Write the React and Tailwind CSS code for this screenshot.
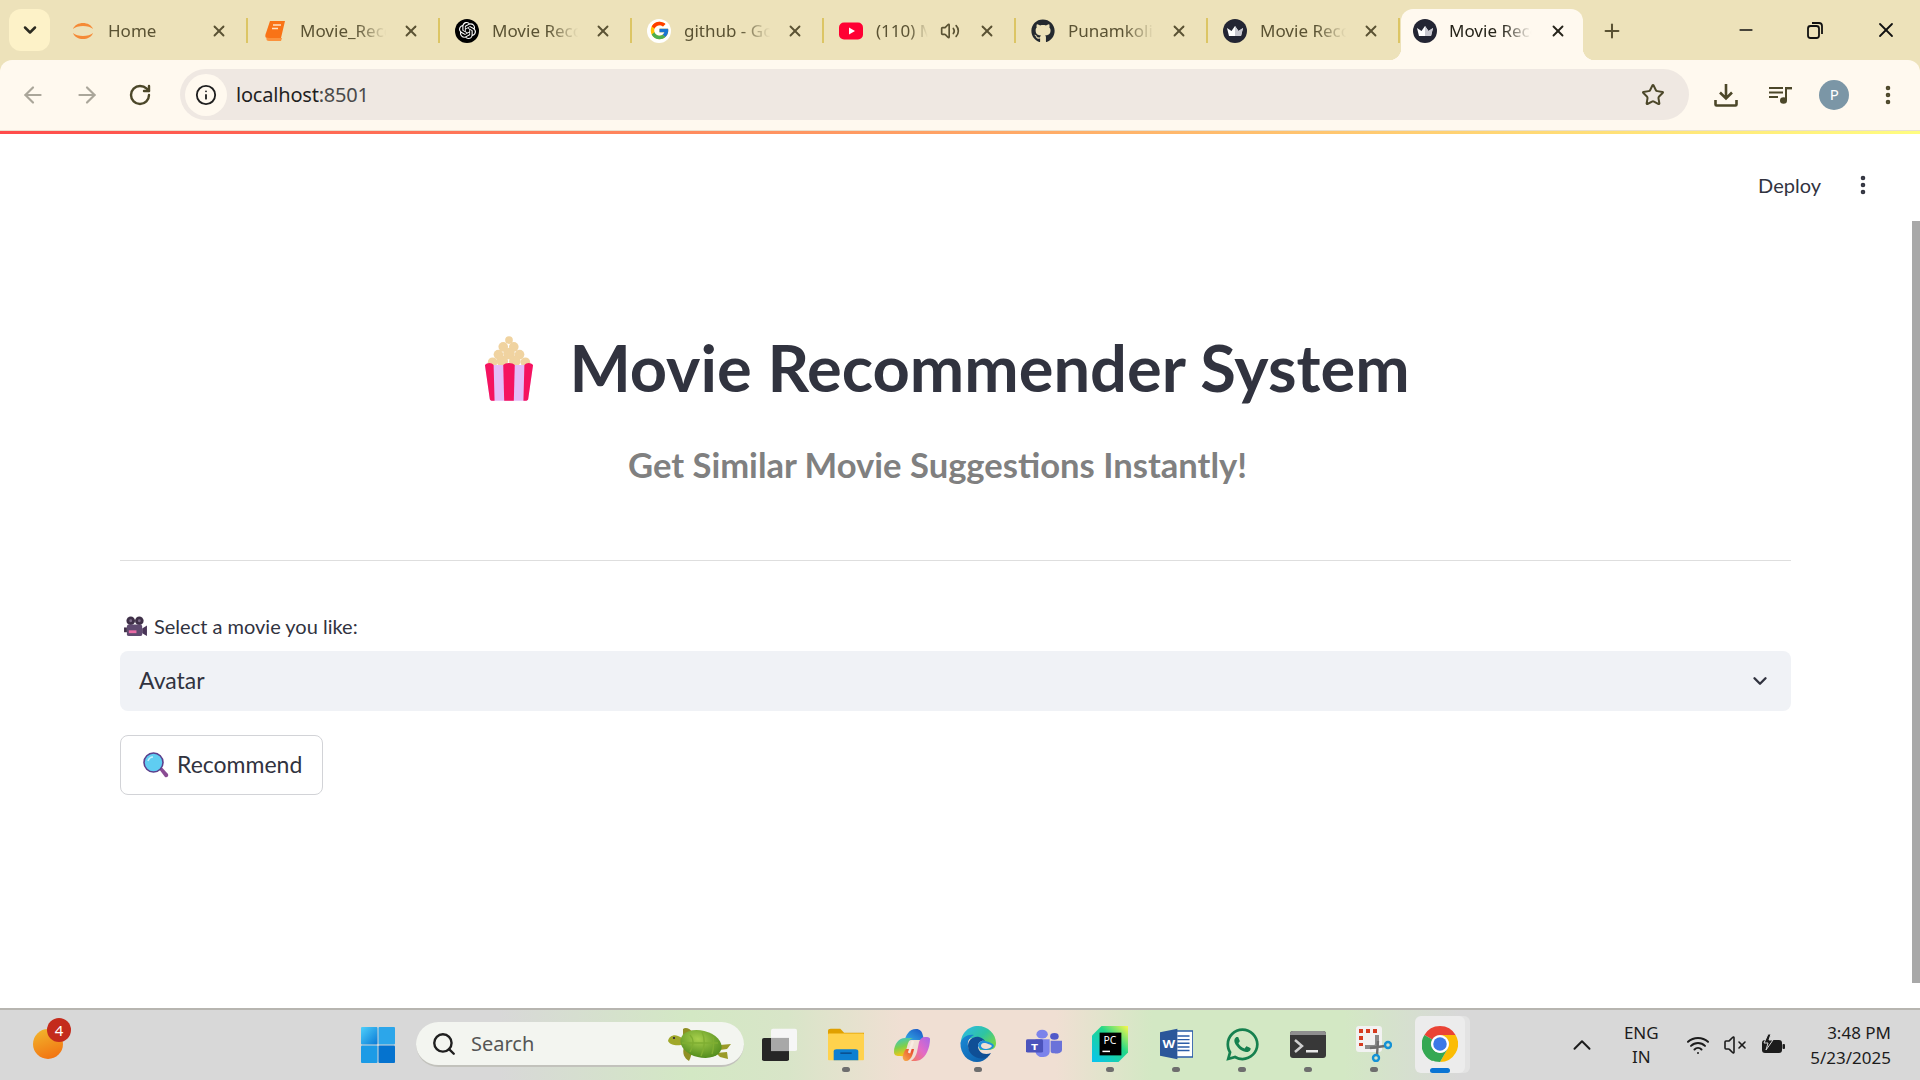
import {
  ArrowLeft,
  ArrowRight,
  ChevronDown,
  ChevronUp,
  Info,
  Minus,
  MoreVertical,
  Plus,
  RotateCw,
  Search,
  Star,
  Volume2,
  VolumeX,
  Wifi,
  X,
} from "lucide-react";
import { FaGithub, FaWhatsapp } from "react-icons/fa";
import { FcGoogle } from "react-icons/fc";
import { SiOpenai } from "react-icons/si";

//Favicons
const HomeIcon = () => (
  <svg viewBox="0 0 24 24" className="w-6 h-6">
    <path d="M2 10C5 2 19 2 22 10C18 6 6 6 2 10Z" fill="#f58a36" />
    <path d="M2 14C5 22 19 22 22 14C18 18 6 18 2 14Z" fill="#f58a36" />
  </svg>
);

const BookIcon = () => (
  <svg viewBox="0 0 24 24" className="w-6 h-6">
    <path d="M7 2H22L18 19H4C2 19 2 16 3 14Z" fill="#f97316" />
    <path d="M3.5 18.5C3 21 4 22 6 22H18L19 19H6Z" fill="#fb923c" />
    <path d="M10 6H18M9 9.5H15" stroke="#ffe2c4" strokeWidth="1.5" />
  </svg>
);

const OpenAiIcon = () => (
  <div className="w-6 h-6 rounded-full bg-black flex items-center justify-center text-white">
    <SiOpenai size={17} />
  </div>
);

const GoogleIcon = () => (
  <div className="w-6 h-6 rounded-full bg-white flex items-center justify-center">
    <FcGoogle size={21} />
  </div>
);

const YoutubeIcon = () => (
  <svg viewBox="0 0 24 24" className="w-6 h-6">
    <rect x="0" y="3.5" width="24" height="17" rx="5" fill="#ff0033" />
    <path d="M10 8.5L16 12L10 15.5Z" fill="#fff" />
  </svg>
);

const CrownIcon = () => (
  <svg viewBox="0 0 24 24" className="w-6 h-6 shrink-0">
    <circle cx="12" cy="12" r="12" fill="#232533" />
    <path d="M4 9L8.5 12L12 7L15.5 12L20 9L18 17H6Z" fill="#fff" />
    <path d="M12 7L15.5 12L20 9L18 17H12Z" fill="#c9c9d1" />
  </svg>
);

//Toolbar icons
const DownloadIcon = () => (
  <svg viewBox="0 0 24 24" className="w-6 h-6" fill="none" stroke="#4c4729" strokeWidth="2.6">
    <path d="M12 1V15M6 9.5L12 15.5L18 9.5" />
    <path d="M1.5 17V21.5C1.5 22 2 22.5 2.5 22.5H21.5C22 22.5 22.5 22 22.5 21.5V17" />
  </svg>
);

const MusicQueue = () => (
  <svg viewBox="0 0 24 18" className="w-6 h-[18px]" fill="#4c4729">
    <rect x="0" y="1" width="14" height="2" />
    <rect x="0" y="5.5" width="14" height="2" />
    <rect x="0" y="10" width="9" height="2" />
    <rect x="16" y="1" width="2" height="13" />
    <rect x="16" y="1" width="7" height="2.4" />
    <ellipse cx="14.5" cy="14.5" rx="3.5" ry="3.2" />
  </svg>
);

//Popcorn emoji
const Popcorn = () => (
  <svg viewBox="0 0 52 68" className="w-[50px] h-[66px] shrink-0">
    <g fill="#f0d3a0">
      <circle cx="26" cy="5" r="4" />
      <circle cx="20" cy="12" r="5" />
      <circle cx="31" cy="12" r="5" />
      <circle cx="15" cy="20" r="5" />
      <circle cx="26" cy="19" r="6" />
      <circle cx="37" cy="20" r="5" />
      <circle cx="9" cy="28" r="5" />
      <circle cx="19" cy="27" r="6" />
      <circle cx="32" cy="27" r="6" />
      <circle cx="43" cy="28" r="5" />
    </g>
    <path d="M1 31H51L46 66C46 67 45 68 44 68H8C7 68 6 67 6 66Z" fill="#e3bdf8" />
    <path d="M1 31C3 28 8 28 10 31L11 68H8C7 68 6 67 6 66Z" fill="#f5135f" />
    <path d="M20 31C22 28 30 28 32 31L31 68H21Z" fill="#f5135f" />
    <path d="M42 31C44 28 49 28 51 31L46 66C46 67 45 68 44 68H41Z" fill="#f5135f" />
  </svg>
);

const MovieCamera = () => (
  <svg viewBox="0 0 24 22" className="w-[23px] h-[21px] shrink-0">
    <circle cx="7" cy="5" r="4.5" fill="#3f3048" />
    <circle cx="16" cy="5" r="4.5" fill="#3f3048" />
    <circle cx="7" cy="5" r="1.5" fill="#7d6b88" />
    <circle cx="16" cy="5" r="1.5" fill="#7d6b88" />
    <rect x="3" y="9" width="16" height="12" rx="2" fill="#5f4a70" />
    <rect x="5" y="15" width="8" height="3" fill="#e96aa5" />
    <path d="M19 13L24 10V21L19 18Z" fill="#4a3558" />
    <rect x="0" y="12" width="3" height="5" fill="#3f3048" />
  </svg>
);

const Magnifier = () => (
  <svg viewBox="0 0 26 26" className="w-[26px] h-[26px] shrink-0">
    <path d="M16 17L18.5 15L25 22C26 24 24 26 22 25Z" fill="#8a4b93" />
    <circle cx="10.5" cy="10.5" r="9.5" fill="#5fcdf2" stroke="#5b3f8c" strokeWidth="1.6" />
    <path d="M5 9C6 6 8 5 10 5" stroke="#c5f0fc" strokeWidth="1.6" fill="none" />
  </svg>
);

//Taskbar icons
const WindowsLogo = () => (
  <svg viewBox="0 0 34 36" className="w-[34px] h-[36px]">
    <defs>
      <linearGradient id="winA" x1="0" y1="0" x2="1" y2="1">
        <stop offset="0" stopColor="#4fd0fb" />
        <stop offset="1" stopColor="#0a7ad6" />
      </linearGradient>
    </defs>
    <rect x="0" y="0" width="16.5" height="17.5" rx="1" fill="url(#winA)" />
    <rect x="17.5" y="0" width="16.5" height="17.5" rx="1" fill="#2ca6ea" />
    <rect x="0" y="18.5" width="16.5" height="17.5" rx="1" fill="#1c9be6" />
    <rect x="17.5" y="18.5" width="16.5" height="17.5" rx="1" fill="#0573cf" />
  </svg>
);

const Turtle = () => (
  <svg viewBox="0 0 64 34" className="w-16 h-[34px] shrink-0">
    <defs>
      <radialGradient id="shellA" cx="0.4" cy="0.35" r="0.7">
        <stop offset="0" stopColor="#a8d04c" />
        <stop offset="1" stopColor="#4f8a1c" />
      </radialGradient>
    </defs>
    <path d="M15 8L15 2C17 0 22 1 24 5L26 9Z" fill="#8f8f24" />
    <path d="M16 20C14 26 16 31 21 34C23 30 24 26 24 22Z" fill="#8f8f24" />
    <path d="M52 18L63 17L59 22L52 23Z" fill="#9a9a28" />
    <path d="M48 26L59 25L60 32L52 30Z" fill="#9a9a28" />
    <path d="M0 14C1 9 6 7 10 9C13 10 16 12 18 15L13 18C8 19 2 18 0 14Z" fill="#a0a82a" />
    <circle cx="6" cy="11" r="1.1" fill="#2a1f3a" />
    <ellipse cx="33" cy="17" rx="21" ry="13.5" transform="rotate(14 33 17)" fill="url(#shellA)" />
    <path d="M22 8C26 12 26 18 22 25M34 5C37 11 37 20 33 29M45 10C46 15 46 20 44 27M14 16H50" stroke="#7fae32" strokeWidth="1.4" fill="none" />
  </svg>
);

const TaskView = () => (
  <svg viewBox="0 0 36 40" className="w-9 h-[33px]" preserveAspectRatio="none">
    <rect x="0" y="12" width="27" height="28" rx="2" fill="#262626" />
    <rect x="9" y="1" width="26" height="27" rx="2" fill="#f6f6f6" />
    <rect x="9" y="12" width="18" height="16" fill="#a8a8a8" />
  </svg>
);

const FilesIcon = () => (
  <svg viewBox="0 0 38 42" className="w-9 h-[33px]" preserveAspectRatio="none">
    <path d="M0 4C0 2 1 1 3 1H13L17 6H38V12H0Z" fill="#e0a000" />
    <rect x="0" y="7" width="38" height="34" rx="1" fill="#ffd24d" />
    <path d="M6 41V30C6 28 7 27 9 27H29C31 27 32 28 32 30V41Z" fill="#0d7fd1" />
    <rect x="13" y="31" width="12" height="2" fill="#0a4f8f" />
  </svg>
);

const CopilotIcon = () => (
  <svg viewBox="0 0 36 33" className="w-9 h-[33px]">
    <defs>
      <linearGradient id="copA" x1="0" y1="1" x2="1" y2="0">
        <stop offset="0" stopColor="#35b8e8" />
        <stop offset="1" stopColor="#1a4fc4" />
      </linearGradient>
      <linearGradient id="copB" x1="0" y1="1" x2="1" y2="0">
        <stop offset="0" stopColor="#f47a5a" />
        <stop offset="0.5" stopColor="#e36ac6" />
        <stop offset="1" stopColor="#a767e8" />
      </linearGradient>
      <linearGradient id="copC" x1="0" y1="0" x2="0.3" y2="1">
        <stop offset="0" stopColor="#35c4d6" />
        <stop offset="0.55" stopColor="#7ed04a" />
        <stop offset="1" stopColor="#f5c518" />
      </linearGradient>
      <linearGradient id="copD" x1="0" y1="1" x2="1" y2="0">
        <stop offset="0" stopColor="#f7b04a" />
        <stop offset="1" stopColor="#e8402c" />
      </linearGradient>
    </defs>
    <path d="M10 14C12 7 15 1 22 1C26 1 28 3 29 8L30 12H17Z" fill="url(#copA)" />
    <path d="M0 24C0 16 5 10 11 10H19C15 11 14 15 13 19L11 26C10 29 8 28 5 28C2 28 0 27 0 24Z" fill="url(#copC)" />
    <path d="M36 11C36 20 32 29 26 32C24 33 20 33 17 33C20 31 22 28 23 24L25 14C26 11 28 9 31 9H33C35 9 36 10 36 11Z" fill="url(#copB)" />
    <path d="M9 27C10 24 11 22 12 21H20C19 26 17 33 12 33C10 33 8 31 9 27Z" fill="url(#copD)" />
    <path d="M15 25L19 13" stroke="#f8ebe2" strokeWidth="2.4" />
  </svg>
);

const EdgeIcon = () => (
  <svg viewBox="0 0 36 36" className="w-9 h-9">
    <defs>
      <linearGradient id="edgeA" x1="0" y1="0" x2="1" y2="0.7">
        <stop offset="0" stopColor="#2fb8ee" />
        <stop offset="0.6" stopColor="#2fc5a0" />
        <stop offset="1" stopColor="#74d64a" />
      </linearGradient>
      <linearGradient id="edgeB" x1="0" y1="0" x2="1" y2="1">
        <stop offset="0" stopColor="#1a8ad6" />
        <stop offset="1" stopColor="#0c5aa6" />
      </linearGradient>
    </defs>
    <path d="M18 0C28 0 36 8 36 17C36 22 33 24 28 24H20C18 20 20 16 24 15C20 10 8 10 1 19C0 8 8 0 18 0Z" fill="url(#edgeA)" />
    <path d="M0.5 17C2 11 8 8 14 9C10 11 7 15 8 20C9 28 18 34 28 31C25 34 21 36 17 36C8 36 0 28 0.5 17Z" fill="url(#edgeB)" />
    <path d="M8 20C8 14 13 10 19 11C22 12 24 13 25 15C21 14 18 17 18 20C18 26 24 30 31 27C29 30 28 31 26 32C16 34 8 28 8 20Z" fill="#0f4f96" />
    <path d="M25 15C30 16 34 18 34 20C33 23 29 24 26 24C21 24 19 22 18 20C18 17 21 14 25 15Z" fill="#1e8fdb" />
    <path d="M24 17C27 17 31 19 32 20C31 22 28 23 26 23C23 23 21 21 21 20C21 18 22 17 24 17Z" fill="#f0dfd3" />
  </svg>
);

const TeamsIcon = () => (
  <svg viewBox="0 0 38 42" className="w-9 h-[31px]" preserveAspectRatio="none">
    <circle cx="17" cy="7" r="6" fill="#7b83eb" />
    <circle cx="30" cy="10" r="4.5" fill="#5059c9" />
    <path d="M10 14H25V30C25 36 21 38 17 38C13 38 10 34 10 30Z" fill="#7b83eb" />
    <path d="M26 16H38V28C38 32 34 34 30 33C28 33 26 32 26 30Z" fill="#6a72d9" />
    <rect x="0" y="14" width="18" height="18" rx="2" fill="#4b53bc" />
    <text x="9" y="28" textAnchor="middle" fontSize="13" fontWeight="700" fontFamily="Noto Sans" fill="#fff">T</text>
  </svg>
);

const PyCharmIcon = () => (
  <svg viewBox="0 0 38 38" className="w-9 h-9">
    <defs>
      <linearGradient id="pcA" x1="0" y1="1" x2="1" y2="0">
        <stop offset="0" stopColor="#07c3f2" />
        <stop offset="0.6" stopColor="#21d789" />
        <stop offset="1" stopColor="#fcf84a" />
      </linearGradient>
    </defs>
    <path d="M10 0H38V28L28 38H0V10Z" fill="url(#pcA)" />
    <rect x="8" y="7" width="23" height="24" fill="#000" />
    <text x="19" y="19" textAnchor="middle" fontSize="11" fontFamily="Noto Sans" fill="#fff">PC</text>
    <rect x="11" y="26" width="8" height="1.6" fill="#fff" />
  </svg>
);

const WordIcon = () => (
  <svg viewBox="0 0 38 44" className="w-[33px] h-[32px]" preserveAspectRatio="none">
    <rect x="14" y="4" width="24" height="36" rx="1" fill="#fff" stroke="#2b5ca8" strokeWidth="2" />
    <path d="M20 11H34M20 16H34M20 21H34M20 26H34M20 31H34" stroke="#2b5ca8" strokeWidth="2" />
    <path d="M0 6L20 1V43L0 38Z" fill="#2b579a" />
    <text x="10" y="28" textAnchor="middle" fontSize="15" fontWeight="700" fontFamily="Noto Sans" fill="#fff">W</text>
  </svg>
);

const TerminalIcon = () => (
  <svg viewBox="0 0 36 27" className="w-9 h-[27px]">
    <rect x="0" y="0" width="36" height="27" rx="3" fill="#383838" />
    <path d="M0 3C0 1 1 0 3 0H33C35 0 36 1 36 3V4H0Z" fill="#8f8f8f" />
    <path d="M5 9L12 15L5 21" stroke="#cfcfcf" strokeWidth="2.5" fill="none" />
    <rect x="16" y="19" width="12" height="2.5" fill="#e8e8e8" />
  </svg>
);

const SnipIcon = () => (
  <svg viewBox="0 0 36 36" className="w-9 h-9">
    <rect x="0" y="0" width="26" height="26" rx="3" fill="#f2f2f2" />
    <g fill="#d63b1f">
      <rect x="3" y="3" width="4" height="4" />
      <rect x="10" y="3" width="4" height="4" />
      <rect x="17" y="3" width="4" height="4" />
      <rect x="3" y="10" width="4" height="4" />
      <rect x="3" y="17" width="4" height="3" />
    </g>
    <path d="M9 21H18C20 21 21 20 21 18V9" stroke="#8a8a8a" strokeWidth="4" fill="none" />
    <path d="M14 22L29 20M22 15L21 29" stroke="#6e6e6e" strokeWidth="2.4" fill="none" />
    <circle cx="32" cy="19" r="3" fill="none" stroke="#1492d6" strokeWidth="2.4" />
    <circle cx="20" cy="32" r="3" fill="none" stroke="#1492d6" strokeWidth="2.4" />
  </svg>
);

const ChromeIcon = () => (
  <svg viewBox="0 0 48 48" className="w-9 h-9">
    <path d="M24 0A24 24 0 0 1 44.8 12H24A12 12 0 0 0 13.6 18L3.2 12A24 24 0 0 1 24 0Z" fill="#ea4335" />
    <path d="M3.2 12L13.6 18A12 12 0 0 0 24 36L13.6 46.8A24 24 0 0 1 3.2 12Z" fill="#34a853" />
    <path d="M44.8 12A24 24 0 0 1 24 48L34.4 30A12 12 0 0 0 24 12Z" fill="#fbbc04" />
    <path d="M13.6 30A12 12 0 0 0 34.4 30L24 48A24 24 0 0 1 3.2 36Z" fill="#34a853" />
    <circle cx="24" cy="24" r="11.5" fill="#fff" />
    <circle cx="24" cy="24" r="9" fill="#3b78e7" />
  </svg>
);

const BatteryIcon = () => (
  <svg viewBox="0 0 24 22" className="w-6 h-[22px] ml-[14px]">
    <rect x="1" y="6" width="20" height="13" rx="3" fill="#1c1c1c" />
    <rect x="21.5" y="10" width="2.5" height="5" rx="1" fill="#1c1c1c" />
    <path d="M7 0L3 9H7L5 16L12 6H8L10 0Z" fill="#1c1c1c" stroke="#d8d8d8" strokeWidth="1" />
  </svg>
);

const tabs = [
  { id: 1, title: "Home", icon: <HomeIcon /> },
  { id: 2, title: "Movie_Recommender", icon: <BookIcon /> },
  { id: 3, title: "Movie Recommender", icon: <OpenAiIcon /> },
  { id: 4, title: "github - Google", icon: <GoogleIcon /> },
  { id: 5, title: "(110) Music", icon: <YoutubeIcon />, sound: true },
  { id: 6, title: "Punamkoli", icon: <FaGithub size={24} color="#24292f" /> },
  { id: 7, title: "Movie Recommender", icon: <CrownIcon /> },
];

const taskIcons = [
  { key: "task", icon: <TaskView /> },
  { key: "files", icon: <FilesIcon />, running: true },
  { key: "copilot", icon: <CopilotIcon /> },
  { key: "edge", icon: <EdgeIcon />, running: true },
  { key: "teams", icon: <TeamsIcon /> },
  { key: "pycharm", icon: <PyCharmIcon />, running: true },
  { key: "word", icon: <WordIcon />, running: true },
  { key: "whatsapp", icon: <FaWhatsapp size={37} color="#16804f" />, running: true },
  { key: "terminal", icon: <TerminalIcon />, running: true },
  { key: "snip", icon: <SnipIcon />, running: true },
];

const Tab = ({ title, icon, sound }) => (
  <div className="w-[192px] h-[43px] flex items-center pl-[16px] relative shrink-0">
    <div className="w-6 h-6 shrink-0 flex items-center justify-center">{icon}</div>
    <span
      className={`ml-[13px] overflow-hidden whitespace-nowrap text-[17px] text-[#5a5233] [mask-image:linear-gradient(90deg,black_62%,transparent_96%)] ${
        sound ? "w-[54px]" : "w-[90px]"
      }`}
    >
      {title}
    </span>
    {sound && <Volume2 size={20} className="ml-[10px] text-[#5a5233] shrink-0" />}
    <X size={18} strokeWidth={2.5} className={`text-[#5a5233] shrink-0 ${sound ? "ml-[18px]" : "ml-[12px]"}`} />
    <div className="absolute right-[-1px] top-[9px] w-[2px] h-[25px] bg-[#dcc565]" />
  </div>
);

const App = () => {
  return (
    <div className="w-full h-screen overflow-hidden flex flex-col bg-white font-['Noto_Sans',sans-serif]">
      {/* TAB STRIP */}
      <div className="h-[60px] shrink-0 bg-[#ede2ba] flex pl-[9px] pt-[9px]">
        <div className="w-[41px] h-[42px] rounded-xl bg-[#fdf2c8] flex items-center justify-center mr-[5px] shrink-0">
          <ChevronDown size={20} strokeWidth={3} className="text-[#2b2a20]" />
        </div>
        {tabs.map((tab) => (
          <Tab key={tab.id} {...tab} />
        ))}
        <div className="ml-[2px] w-[182px] h-[51px] bg-[#fff9ef] rounded-t-xl flex items-center pl-[12px] pb-[8px] relative shrink-0">
          <div className="absolute bottom-0 left-[-12px] w-3 h-3 bg-[radial-gradient(circle_at_0_0,transparent_12px,#fff9ef_12.5px)]" />
          <div className="absolute bottom-0 right-[-12px] w-3 h-3 bg-[radial-gradient(circle_at_100%_0,transparent_12px,#fff9ef_12.5px)]" />
          <CrownIcon />
          <span className="ml-[12px] w-[86px] overflow-hidden whitespace-nowrap text-[17px] text-[#26241a] [mask-image:linear-gradient(90deg,black_62%,transparent_96%)]">
            Movie Recommender
          </span>
          <X size={18} strokeWidth={2.5} className="ml-[14px] text-[#26241a] shrink-0" />
        </div>
        <div className="ml-[18px] h-[43px] flex items-center shrink-0">
          <Plus size={22} strokeWidth={2.2} className="text-[#5a5233]" />
        </div>
        <div className="flex-1 flex items-center justify-end h-[41px] pr-[22px] gap-[49px]">
          <Minus size={20} className="text-[#111]" />
          <svg viewBox="0 0 20 20" className="w-5 h-5" fill="none" stroke="#111" strokeWidth="1.8">
            <rect x="3" y="6" width="11" height="12" rx="2.5" />
            <path d="M7 3H14C16 3 17 4 17 6V14" />
          </svg>
          <X size={24} strokeWidth={1.8} className="text-[#111]" />
        </div>
      </div>

      {/* TOOLBAR */}
      <div className="h-[71px] shrink-0 bg-[#ede2ba]">
        <div className="h-full bg-[#fff9ef] rounded-t-xl border-b border-[#e9e0cf] flex items-center pb-[1px]">
          <div className="flex items-center pl-[20px] gap-[28px] shrink-0">
            <ArrowLeft size={26} className="text-[#aaa69a]" />
            <ArrowRight size={26} className="text-[#aaa69a]" />
            <RotateCw size={24} strokeWidth={2.4} className="text-[#4c4729]" />
          </div>
          <div className="ml-[28px] w-[1509px] h-[51px] bg-[#efe8e2] rounded-full flex items-center pl-[5px] pr-[24px] shrink-0">
            <div className="w-[42px] h-[42px] rounded-full bg-[#fff9ef] flex items-center justify-center">
              <Info size={22} strokeWidth={2} className="text-[#1f1f1f]" />
            </div>
            <span className="ml-[9px] flex-1 text-[20px] tracking-[-0.2px] text-[#1f1f1f]">
              localhost<span className="text-[#4a4a4a]">:8501</span>
            </span>
            <Star size={24} strokeWidth={2} className="text-[#4c4729]" />
          </div>
          <div className="flex-1 flex items-center justify-between pl-[25px] pr-[20px]">
            <DownloadIcon />
            <div className="pl-[4px]">
              <MusicQueue />
            </div>
            <div className="w-[30px] h-[30px] rounded-full bg-[#7b96a6] flex items-center justify-center text-white text-[15px]">
              P
            </div>
            <MoreVertical size={24} strokeWidth={2.6} className="text-[#4c4729]" />
          </div>
        </div>
      </div>

      {/* PAGE */}
      <div className="flex-1 relative overflow-hidden flex flex-col font-['Lato',sans-serif]">
        <div className="h-[3px] shrink-0 bg-[linear-gradient(90deg,#ff4b4b,#fffd80)]" />
        <div className="absolute right-0 top-[90px] w-[8px] h-[762px] bg-[#a8a8a8]" />
        <div className="flex justify-end items-center h-[30px] mt-[36px] pr-[45px] text-[#31333f]">
          <span className="text-[20px]">Deploy</span>
          <MoreVertical size={24} strokeWidth={2.6} className="ml-[30px] text-[#31333f]" />
        </div>

        <div className="pl-[120px] pr-[129px] flex flex-col">
          <div className="mt-[128px] h-[80px] flex items-center justify-center pr-[17px] gap-[35px]">
            <Popcorn />
            <h1 className="text-[65px] font-bold text-[#31333f] whitespace-nowrap">
              Movie Recommender System
            </h1>
          </div>
          <div className="mt-[32px] h-[50px] flex items-center justify-center pr-[36px]">
            <h2 className="text-[34.6px] font-bold text-[#808080] whitespace-nowrap">
              Get Similar Movie Suggestions Instantly!
            </h2>
          </div>
          <hr className="mt-[70px] border-t border-[#dedede]" />

          {/* SELECT */}
          <label className="mt-[53px] h-6 flex items-center pl-[4px] text-[20px] text-[#31333f]">
            <MovieCamera />
            <span className="ml-[7px]">Select a movie you like:</span>
          </label>
          <div className="mt-[13px] h-[60px] bg-[#f0f2f6] rounded-lg flex items-center justify-between pl-[19px] pr-[20px]">
            <span className="text-[23px] pb-[2px] text-[#31333f]">Avatar</span>
            <ChevronDown size={22} strokeWidth={2.6} className="text-[#31333f]" />
          </div>

          {/* BUTTON */}
          <button className="mt-[24px] w-[203px] h-[60px] bg-white border border-[#d2d3d7] rounded-lg flex items-center pl-[22px] text-[#31333f]">
            <Magnifier />
            <span className="ml-[8px] pb-[2px] text-[23px]">Recommend</span>
          </button>
        </div>
      </div>

      {/* TASKBAR */}
      <div className="h-[72px] shrink-0 border-t-2 border-[#b7b5b0] flex items-start bg-[linear-gradient(90deg,#d8d8d8_0%,#d8d8d8_26%,#d3e8c4_36%,#d8e5c8_41%,#f0dfd3_47%,#f0dfd3_55%,#d3e8c4_60%,#d3e8c4_70%,#d8d8d8_76%,#d8d8d8_100%)]">
        <div className="relative ml-[33px] mt-[19px] w-[30px] h-[30px] rounded-full bg-[linear-gradient(160deg,#f2b92e,#f26b0e)] shrink-0">
          <div className="absolute -top-[11px] left-[14px] w-[24px] h-[24px] rounded-full bg-[#c42b1c] text-white text-[15px] flex items-center justify-center">
            4
          </div>
        </div>
        <div className="ml-[298px] mt-[17px] shrink-0">
          <WindowsLogo />
        </div>
        <div className="ml-[21px] mt-[12px] w-[328px] h-[45px] rounded-full bg-[#f3f5f0] border-b-2 border-[#c2c2bc] flex items-center pl-[15px] pr-[12px] shrink-0">
          <Search size={26} strokeWidth={2.2} className="text-[#1f1f1f]" />
          <span className="ml-[14px] flex-1 text-[20px] text-[#555]">Search</span>
          <Turtle />
        </div>
        <div className="ml-[3px] flex shrink-0">
          {taskIcons.map((item) => (
            <div key={item.key} className="w-[66px] h-[70px] flex flex-col items-center justify-start pt-[11px] relative">
              <div className="h-[46px] flex items-center justify-center">{item.icon}</div>
              {item.running && <div className="absolute bottom-[8px] w-[8px] h-[5px] rounded-full bg-[#6e6e6e]" />}
            </div>
          ))}
          <div className="w-[66px] h-[70px] flex items-start justify-center pt-[6px]">
            <div className="w-[50px] h-[57px] rounded-md bg-[#ececec] shadow-[5px_0_0_#e3e3e3] flex flex-col items-center pt-[10px] relative">
              <ChromeIcon />
              <div className="absolute bottom-0 w-[20px] h-[5px] rounded-full bg-[#0a74d4]" />
            </div>
          </div>
        </div>
        <div className="flex-1 h-full flex items-center justify-end pr-[29px] text-[#1c1c1c]">
          <ChevronUp size={30} strokeWidth={1.6} />
          <div className="ml-[25px] w-[38px] text-center text-[17px] leading-[24px]">
            <div>ENG</div>
            <div>IN</div>
          </div>
          <Wifi size={24} strokeWidth={2} className="ml-[26px]" />
          <VolumeX size={24} strokeWidth={1.6} className="ml-[13px]" />
          <BatteryIcon />
          <div className="ml-[25px] text-right text-[17px] leading-[25px]">
            <div>3:48 PM</div>
            <div>5/23/2025</div>
          </div>
        </div>
      </div>
    </div>
  );
};

export default App;
